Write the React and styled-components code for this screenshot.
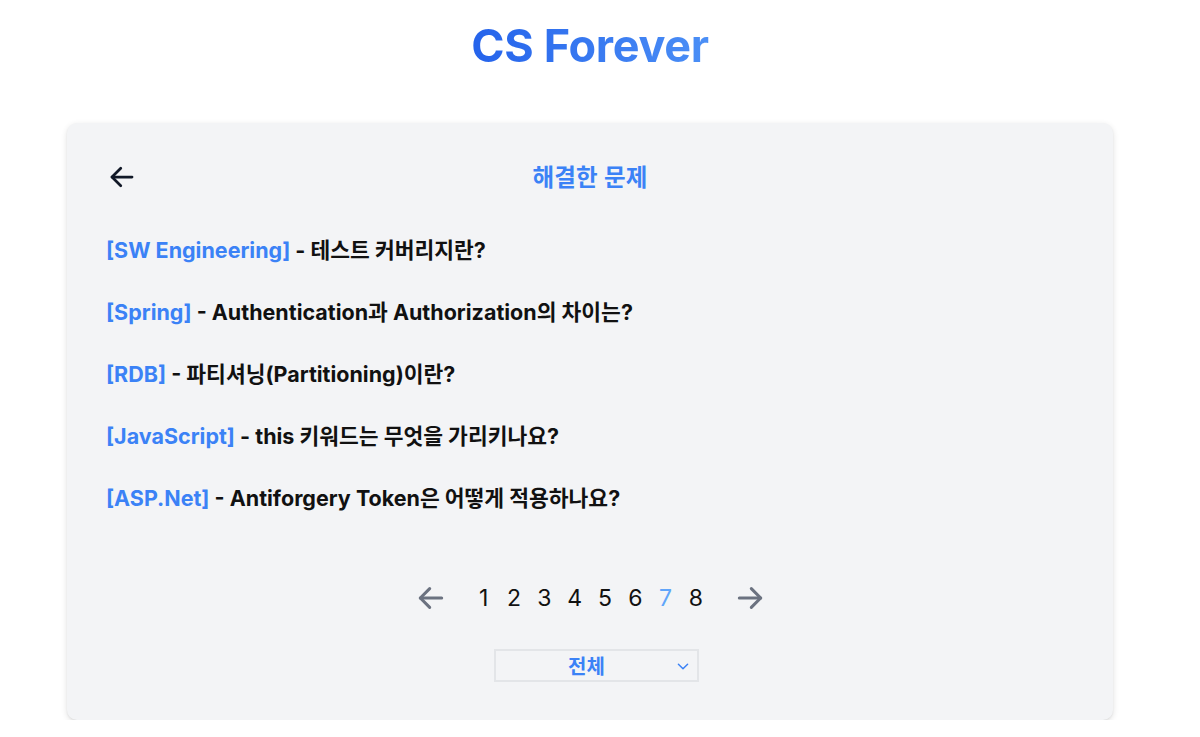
import React, { useState } from 'react';
import styled, { createGlobalStyle } from 'styled-components';

const GlobalStyle = createGlobalStyle`
  html, body {
    margin: 0;
    padding: 0;
    background: #ffffff;
    font-family: Inter, "Noto Sans CJK KR", "Liberation Sans", sans-serif;
  }
`;

const Page = styled.div`
  width: 1180px;
  display: flex;
  flex-direction: column;
  align-items: center;
`;

const Title = styled.h1`
  margin: 20px 0 0;
  height: 52px;
  font-size: 45px;
  line-height: 52px;
  font-weight: 700;
  letter-spacing: -0.3px;
  background: linear-gradient(90deg, #2563eb 0%, #4b8ff6 100%);
  -webkit-background-clip: text;
  background-clip: text;
  color: transparent;
`;

const Card = styled.section`
  margin-top: 51px;
  width: 1046px;
  height: 597px;
  box-sizing: border-box;
  background: #f3f4f6;
  border-radius: 10px;
  box-shadow: 0 2px 6px rgba(0, 0, 0, 0.12), 0 1px 2px rgba(0, 0, 0, 0.06);
  padding: 38px 39px 0;
  display: flex;
  flex-direction: column;
`;

const Header = styled.div`
  position: relative;
  height: 30px;
  display: flex;
  align-items: center;
  justify-content: center;
`;

const BackButton = styled.button`
  position: absolute;
  left: 1px;
  top: 1px;
  width: 30px;
  height: 30px;
  padding: 0;
  border: none;
  background: none;
  display: flex;
  align-items: center;
  justify-content: center;
  cursor: pointer;
  color: #111827;
`;

const HeaderTitle = styled.h2`
  margin: 0;
  font-size: 23.5px;
  font-weight: 600;
  color: #3b82f6;
  letter-spacing: 0.2px;
`;

const List = styled.ul`
  list-style: none;
  margin: 44px 0 0;
  padding: 0;
  display: flex;
  flex-direction: column;
  gap: 32px;
`;

const Item = styled.li`
  height: 30px;
  line-height: 30px;
  font-size: 21.5px;
  font-weight: 700;
  color: #111111;
  white-space: nowrap;
`;

const Category = styled.span`
  color: #3b82f6;
`;

const Pager = styled.nav`
  margin-top: 69px;
  padding-left: 309px;
  display: flex;
  align-items: center;
  gap: 5.3px;
`;

const ArrowButton = styled.button`
  width: 32px;
  height: 32px;
  padding: 0;
  margin: ${p => (p.$side === 'left' ? '0 19px 0 0' : '0 0 0 20px')};
  border: none;
  background: none;
  display: flex;
  align-items: center;
  justify-content: center;
  color: #6b7280;
  cursor: pointer;
`;

const PageNum = styled.button`
  width: 25px;
  padding: 0;
  border: none;
  background: none;
  font-family: Inter, "Liberation Sans", sans-serif;
  font-size: 23px;
  font-weight: 400;
  color: ${p => (p.$active ? '#60a5fa' : '#111111')};
  cursor: pointer;
`;

const SelectWrap = styled.div`
  margin: 35px 0 0 388px;
  position: relative;
  width: 205px;
  height: 33px;
  box-sizing: border-box;
  border: 2px solid #e3e5e8;
  background: #f3f4f6;
  display: flex;
  align-items: center;
  justify-content: center;
`;

const SelectLabel = styled.span`
  font-size: 20px;
  font-weight: 700;
  color: #3b82f6;
  margin-left: -20px;
`;

const Chevron = styled.span`
  position: absolute;
  right: 3px;
  top: 4px;
  display: flex;
  color: #3b82f6;
`;

const items = [
  ['[SW Engineering]', '테스트 커버리지란?'],
  ['[Spring]', 'Authentication과 Authorization의 차이는?'],
  ['[RDB]', '파티셔닝(Partitioning)이란?'],
  ['[JavaScript]', 'this 키워드는 무엇을 가리키나요?'],
  ['[ASP.Net]', 'Antiforgery Token은 어떻게 적용하나요?'],
];

const ArrowLeft = ({ size = 28, w = 2 }) => (
  <svg width={size} height={size} viewBox="0 0 24 24" fill="none" stroke="currentColor" strokeWidth={w} strokeLinecap="round" strokeLinejoin="round">
    <path d="M20 12H4" />
    <path d="M11 19l-7-7 7-7" />
  </svg>
);

const ArrowRight = ({ size = 28, w = 2 }) => (
  <svg width={size} height={size} viewBox="0 0 24 24" fill="none" stroke="currentColor" strokeWidth={w} strokeLinecap="round" strokeLinejoin="round">
    <path d="M4 12h16" />
    <path d="M13 5l7 7-7 7" />
  </svg>
);

export default function App() {
  const [page, setPage] = useState(7);
  return (
    <Page>
      <GlobalStyle />
      <Title>CS Forever</Title>
      <Card>
        <Header>
          <BackButton aria-label="back">
            <ArrowLeft size={30} w={2.2} />
          </BackButton>
          <HeaderTitle>해결한 문제</HeaderTitle>
        </Header>
        <List>
          {items.map(([cat, q]) => (
            <Item key={cat}>
              <Category>{cat}</Category> - {q}
            </Item>
          ))}
        </List>
        <Pager>
          <ArrowButton $side="left" onClick={() => setPage(Math.max(1, page - 1))}>
            <ArrowLeft size={32} w={2.3} />
          </ArrowButton>
          {[1, 2, 3, 4, 5, 6, 7, 8].map(n => (
            <PageNum key={n} $active={n === page} onClick={() => setPage(n)}>
              {n}
            </PageNum>
          ))}
          <ArrowButton $side="right" onClick={() => setPage(Math.min(8, page + 1))}>
            <ArrowRight size={32} w={2.3} />
          </ArrowButton>
        </Pager>
        <SelectWrap>
          <SelectLabel>전체</SelectLabel>
          <Chevron>
            <svg width="22" height="22" viewBox="0 0 24 24" fill="none" stroke="currentColor" strokeWidth="1.6" strokeLinecap="round" strokeLinejoin="round">
              <path d="M7 10l5 5 5-5" />
            </svg>
          </Chevron>
        </SelectWrap>
      </Card>
    </Page>
  );
}
